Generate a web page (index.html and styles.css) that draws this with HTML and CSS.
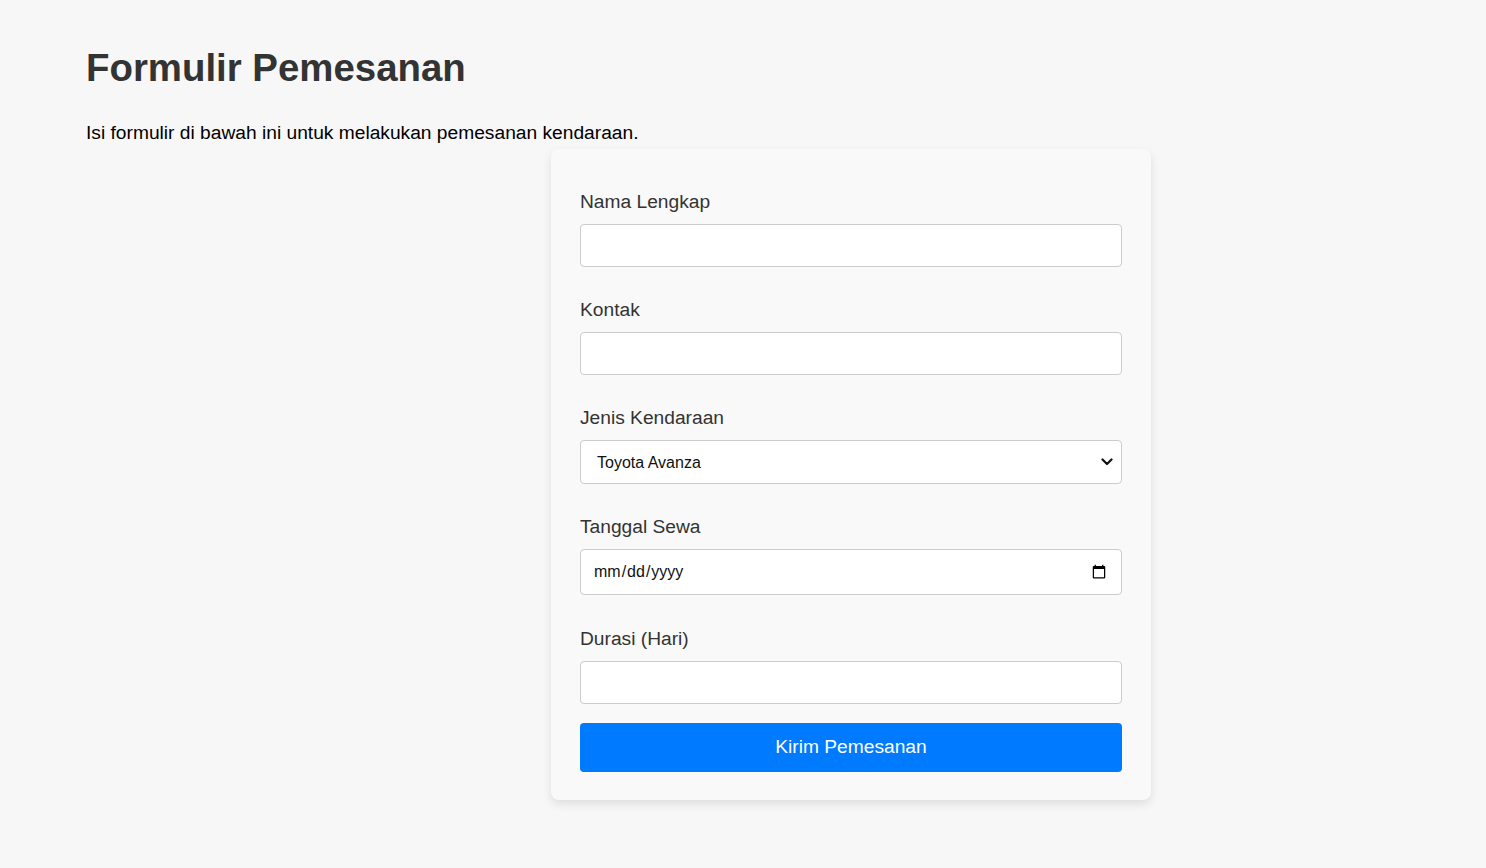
FILE: index.html
```html
<!DOCTYPE html>
<html lang="id">
<head>
<meta charset="utf-8">
<title>Formulir Pemesanan</title>
<link rel="stylesheet" href="styles.css">
</head>
<body>
<main class="page">
  <h1 class="title">Formulir Pemesanan</h1>
  <p class="intro">Isi formulir di bawah ini untuk melakukan pemesanan kendaraan.</p>
  <form class="card">
    <div class="group">
      <label class="label" for="nama">Nama Lengkap</label>
      <input class="field" type="text" id="nama">
    </div>
    <div class="group">
      <label class="label" for="kontak">Kontak</label>
      <input class="field" type="text" id="kontak">
    </div>
    <div class="group">
      <label class="label" for="jenis">Jenis Kendaraan</label>
      <select class="field field-select" id="jenis">
        <option>Toyota Avanza</option>
        <option>Honda Jazz</option>
      </select>
    </div>
    <div class="group">
      <label class="label" for="tanggal">Tanggal Sewa</label>
      <input class="field field-date" type="date" id="tanggal">
    </div>
    <div class="group">
      <label class="label" for="durasi">Durasi (Hari)</label>
      <input class="field" type="number" id="durasi">
    </div>
    <button class="submit" type="button">Kirim Pemesanan</button>
  </form>
</main>
</body>
</html>
```

FILE: styles.css
```css
* {
  box-sizing: border-box;
}

html, body {
  margin: 0;
  padding: 0;
  background: #f7f7f7;
}

body {
  font-family: "Liberation Sans", Arial, sans-serif;
  color: #000;
}

.page {
  padding: 46px 86px 40px 86px;
}

.title {
  margin: 0;
  font-size: 38.4px;
  line-height: 44px;
  font-weight: bold;
  color: #333;
}

.intro {
  margin: 32px 0 0 0;
  font-size: 19.2px;
  line-height: 22px;
  color: #000;
}

.card {
  width: 600px;
  margin: 5px 0 0 465px;
  padding: 30px 29px 28px 29px;
  background: #f9f9f9;
  border-radius: 8px;
  box-shadow: 0 4px 10px rgba(0, 0, 0, 0.1);
}

.group {
  display: flex;
  flex-direction: column;
}

.label {
  display: block;
  margin: 12px 0 11px 0;
  font-size: 19.2px;
  line-height: 22px;
  color: #333;
}

.field {
  display: block;
  width: 100%;
  height: 43px;
  margin: 0 0 20px 0;
  padding: 0 12px;
  font-family: "Liberation Sans", Arial, sans-serif;
  font-size: 16px;
  color: #111;
  background: #fff;
  border: 1px solid #ccc;
  border-radius: 4px;
}

.field-select {
  height: 44px;
  padding: 0 30px 0 16px;
  -webkit-appearance: none;
  appearance: none;
  background-color: #fff;
  background-image: url("data:image/svg+xml;utf8,<svg xmlns='http://www.w3.org/2000/svg' width='12' height='8' viewBox='0 0 12 8'><path d='M1.5 1.5 L6 6 L10.5 1.5' fill='none' stroke='%23111' stroke-width='2.2' stroke-linecap='round' stroke-linejoin='round'/></svg>");
  background-repeat: no-repeat;
  background-position: right 8px center;
  background-size: 12px 8px;
}

.field-date {
  height: 46px;
  margin-bottom: 21px;
}

.submit {
  display: block;
  width: 100%;
  height: 49px;
  margin: -1px 0 0 0;
  padding: 0 0 2px 0;
  border: none;
  border-radius: 4px;
  background: #007bff;
  color: #fff;
  font-family: "Liberation Sans", Arial, sans-serif;
  font-size: 19.2px;
  line-height: 45px;
  cursor: pointer;
}
```
